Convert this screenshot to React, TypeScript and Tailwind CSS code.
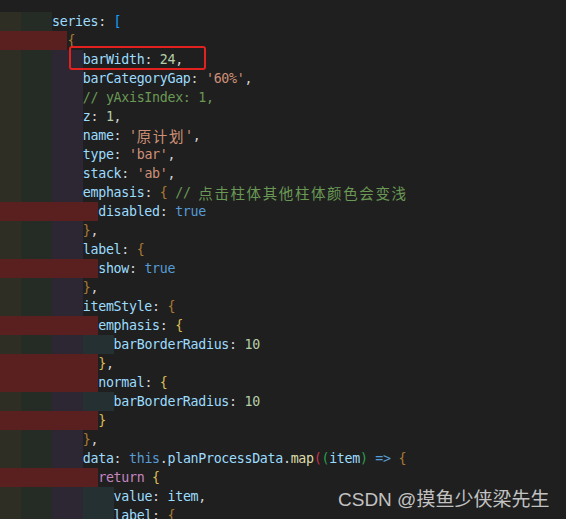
import React from "react";

type Tok = [string, string];
type Line = { indent: number; red: boolean; toks: Tok[] };

const K = "text-[#9cdcfe]";
const P = "text-[#d4d4d4]";
const N = "text-[#b5cea8]";
const S = "text-[#ce9178]";
const C = "text-[#6a9955]";
const B = "text-[#569cd6]";
const BR = "text-[#a97a35]";
const GD = "text-[#d9bd55]";
const BL = "text-[#179fff]";
const FN = "text-[#dcdcaa]";
const RT = "text-[#c586c0]";
const CR = "text-[#d0304f]";
const GR = "text-[#2aa050]";
const CJK = "cjk";

const lines: Line[] = [
  { indent: 0, red: false, toks: [["series", K], [": ", P], ["[", BL]] },
  { indent: 2, red: true, toks: [["{", BR]] },
  { indent: 4, red: false, toks: [["barWidth", K], [": ", P], ["24", N], [",", P]] },
  { indent: 4, red: false, toks: [["barCategoryGap", K], [": ", P], ["'60%'", S], [",", P]] },
  { indent: 4, red: false, toks: [["// yAxisIndex: 1,", C]] },
  { indent: 4, red: false, toks: [["z", K], [": ", P], ["1", N], [",", P]] },
  { indent: 4, red: false, toks: [["name", K], [": ", P], ["'", S], ["原计划", S + " " + CJK], ["'", S], [",", P]] },
  { indent: 4, red: false, toks: [["type", K], [": ", P], ["'bar'", S], [",", P]] },
  { indent: 4, red: false, toks: [["stack", K], [": ", P], ["'ab'", S], [",", P]] },
  { indent: 4, red: false, toks: [["emphasis", K], [": ", P], ["{", BR], [" ", P], ["// ", C], ["点击柱体其他柱体颜色会变浅", C + " " + CJK]] },
  { indent: 6, red: true, toks: [["disabled", K], [": ", P], ["true", B]] },
  { indent: 4, red: false, toks: [["}", BR], [",", P]] },
  { indent: 4, red: false, toks: [["label", K], [": ", P], ["{", BR]] },
  { indent: 6, red: true, toks: [["show", K], [": ", P], ["true", B]] },
  { indent: 4, red: false, toks: [["}", BR], [",", P]] },
  { indent: 4, red: false, toks: [["itemStyle", K], [": ", P], ["{", BR]] },
  { indent: 6, red: true, toks: [["emphasis", K], [": ", P], ["{", GD]] },
  { indent: 8, red: false, toks: [["barBorderRadius", K], [": ", P], ["10", N]] },
  { indent: 6, red: true, toks: [["}", GD], [",", P]] },
  { indent: 6, red: true, toks: [["normal", K], [": ", P], ["{", GD]] },
  { indent: 8, red: false, toks: [["barBorderRadius", K], [": ", P], ["10", N]] },
  { indent: 6, red: true, toks: [["}", GD]] },
  { indent: 4, red: false, toks: [["}", BR], [",", P]] },
  {
    indent: 4,
    red: false,
    toks: [
      ["data", K],
      [": ", P],
      ["this", B],
      [".", P],
      ["planProcessData", K],
      [".", P],
      ["map", FN],
      ["(", CR],
      ["(", GR],
      ["item", K],
      [")", GR],
      [" ", P],
      ["=>", B],
      [" ", P],
      ["{", BR],
    ],
  },
  { indent: 6, red: true, toks: [["return", RT], [" ", P], ["{", GD]] },
  { indent: 8, red: false, toks: [["value", K], [": ", P], ["item", K], [",", P]] },
  { indent: 8, red: false, toks: [["label", K], [": ", P], ["{", BR]] },
];

const mono = { fontFamily: '"DejaVu Sans Mono", monospace' };

function Row({ line }: { line: Line }) {
  const levels = Math.floor(line.indent / 4);
  return (
    <div className="flex h-[19px] items-stretch leading-[19px] whitespace-pre">
      {line.red ? (
        <>
          <div className="w-[52px] shrink-0 bg-[#5a2020]" />
          {line.indent > 0 && (
            <span className="bg-[#5a2020]">{" ".repeat(line.indent)}</span>
          )}
        </>
      ) : (
        <>
          <div className="w-[21px] shrink-0 bg-[#2e2e24]" />
          <div className="w-[31px] shrink-0 bg-[#252c26]" />
          {Array.from({ length: levels }).map((_, i) => (
            <span
              key={i}
              className={i % 2 === 0 ? "bg-[#2d2733]" : "bg-[#253032]"}
            >
              {"    "}
            </span>
          ))}
        </>
      )}
      {line.toks.map(([t, c], i) => {
        const isCjk = c.includes("cjk");
        return (
          <span
            key={i}
            className={
              c.replace(" cjk", "") +
              (isCjk
                ? " text-[14.5px] tracking-[1.6px] font-['Noto_Sans_CJK_SC',sans-serif]"
                : "")
            }
          >
            {t}
          </span>
        );
      })}
    </div>
  );
}

export default function App() {
  return (
    <div className="relative w-[566px] h-[519px] overflow-hidden bg-[#1f1f1f]">
      <div className="pt-[12px] text-[13.3px] tracking-[-0.31px]" style={mono}>
        {lines.map((l, i) => (
          <Row key={i} line={l} />
        ))}
      </div>
      <div className="absolute left-[69px] top-[46px] w-[137px] h-[24px] border-2 border-[#e3211f] rounded-[3px]" />
      <div className="absolute left-[338px] top-[488px] text-[19px] leading-[24px] text-[#c2c2c2] whitespace-nowrap font-['Liberation_Sans','Noto_Sans_CJK_SC',sans-serif]">
        CSDN @摸鱼少侠梁先生
      </div>
    </div>
  );
}
